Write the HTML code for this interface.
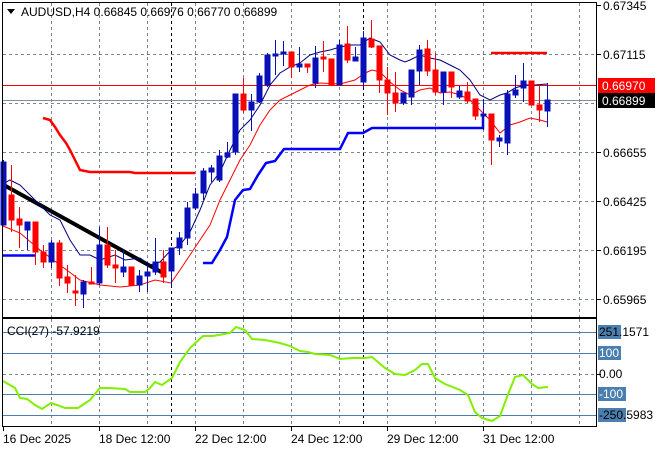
<!DOCTYPE html>
<html><head><meta charset="utf-8"><style>
html,body{margin:0;padding:0;background:#fff;}
svg{display:block;font-family:"Liberation Sans",sans-serif;}
</style></head><body>
<svg width="660" height="450" viewBox="0 0 660 450" xmlns="http://www.w3.org/2000/svg">
<rect width="660" height="450" fill="#fff"/>
<!-- main grid -->
<g stroke="#7a8694" stroke-width="1" stroke-dasharray="3,3" fill="none">
<path d="M51.5 3V317M99.5 3V317M147.5 3V317M195.5 3V317M243.5 3V317M291.5 3V317M339.5 3V317M387.5 3V317M435.5 3V317M483.5 3V317M531.5 3V317M579.5 3V317"/>
<path d="M3 54.5H596M3 103.5H596M3 152.5H596M3 201.5H596M3 250.5H596M3 299.5H596"/>
<path d="M51.5 319V426M99.5 319V426M147.5 319V426M195.5 319V426M243.5 319V426M291.5 319V426M339.5 319V426M387.5 319V426M435.5 319V426M483.5 319V426M531.5 319V426M579.5 319V426M3 374.5H596"/>
</g>
<g stroke="#000" stroke-width="1" stroke-dasharray="3,3"><path d="M171.5 3V317M363.5 3V317M171.5 319V426M363.5 319V426"/></g>
<!-- price lines -->
<path d="M3 85.5H596" stroke="#ff0000"/>
<path d="M3 100.5H596" stroke="#8090a0"/>
<!-- red step upper -->
<polyline fill="none" stroke="#ff0000" stroke-width="2.5" points="43,118 50,120 55,127 60,135 66,143 70,150 75,160 80,170 90,172 130,172 135,173 195,173"/>
<path d="M491 53H547" stroke="#ff0000" stroke-width="2.5"/>
<!-- blue step lower -->
<path d="M2 255.5H35" stroke="#0000ff" stroke-width="2.5"/>
<polyline fill="none" stroke="#0000ff" stroke-width="2.5" points="203,263 212,263 220,250 227,237 235,200 243,190 250,189 258,175 266,163 275,161 284,149 340,149 348,133 363,133 372,128 483,128 483,115"/>
<!-- black trendline -->
<path d="M2 184L163 273" stroke="#000" stroke-width="4"/>
<!-- navy upper line -->
<polyline fill="none" stroke="#000080" stroke-width="1" points="3,184 10,180 20,185 30,195 40,205 50,215 60,220 70,240 80,255 90,255 100,260 115,255 125,260 140,258 150,265 160,262 171,250 180,245 190,232 200,210 210,185 220,172 230,150 240,130 250,120 260,105 270,85 280,73 290,67 300,63 310,55 320,52 330,50 340,47 350,45 360,45 370,38 380,42 390,55 400,60 405,62 410,60 420,55 430,58 440,60 450,65 460,70 470,80 480,95 490,100 500,95 507,93 515,88 525,85 535,85 547,84"/>
<!-- red lower line -->
<polyline fill="none" stroke="#ff0000" stroke-width="1" points="3,226 20,233 40,250 60,265 80,280 100,285 120,287 140,285 155,280 171,283 180,270 190,255 200,240 210,225 220,200 230,180 240,160 250,145 260,125 270,110 280,100 290,95 300,90 310,85 320,83 340,84 355,80 365,73 372,70 380,72 390,82 400,90 410,95 420,90 430,88 440,93 450,92 460,95 470,100 480,110 490,120 500,133 510,125 520,122 530,118 540,120 547,122"/>
<!-- candles blue -->
<g stroke="#0a10b8" fill="#0a10b8" stroke-width="1">
<path d="M3.5 160V225M27.5 222V250M51.5 240V268M83.5 280V308M99.5 227V285M123.5 250V277M139.5 270V292M147.5 265V292M155.5 238V275M171.5 248V287M179.5 232V255M187.5 202V245M195.5 188V210M203.5 168V200M211.5 165V182M219.5 150V182M227.5 142V158M235.5 94V155M251.5 94V131M259.5 73V103M267.5 53V87M275.5 40V75M283.5 41V66M299.5 47V72M315.5 46V88M339.5 40V85M355.5 47V61M363.5 31V88M403.5 93V105M411.5 70V105M419.5 45V85M443.5 72V105M459.5 86V99M483.5 99V130M499.5 135V147M507.5 90V155M515.5 75V98M523.5 63V102M547.5 83V127"/>
<rect x="1" y="162" width="5" height="63"/><rect x="25" y="222" width="5" height="8"/><rect x="49" y="243" width="5" height="19"/><rect x="81" y="282" width="5" height="12"/><rect x="97" y="245" width="5" height="38"/><rect x="121" y="267" width="5" height="5"/><rect x="137" y="276" width="5" height="9"/><rect x="145" y="272" width="5" height="4"/><rect x="153" y="262" width="5" height="10"/><rect x="169" y="248" width="5" height="23"/><rect x="177" y="238" width="5" height="10"/><rect x="185" y="208" width="5" height="30"/><rect x="193" y="194" width="5" height="14"/><rect x="201" y="171" width="5" height="22"/><rect x="209" y="168" width="5" height="4"/><rect x="217" y="156" width="5" height="24"/><rect x="225" y="153" width="5" height="4"/><rect x="233" y="94" width="5" height="58"/><rect x="249" y="102" width="5" height="8"/><rect x="257" y="76" width="5" height="26"/><rect x="265" y="55" width="5" height="30"/><rect x="273" y="54" width="5" height="2"/><rect x="281" y="52" width="5" height="2"/><rect x="297" y="64" width="5" height="3"/><rect x="313" y="58" width="5" height="25"/><rect x="337" y="45" width="5" height="40"/><rect x="353" y="57" width="5" height="4"/><rect x="361" y="38" width="5" height="44"/><rect x="401" y="93" width="5" height="10"/><rect x="409" y="70" width="5" height="27"/><rect x="417" y="50" width="5" height="21"/><rect x="441" y="72" width="5" height="20"/><rect x="457" y="91" width="5" height="6"/><rect x="481" y="114" width="5" height="2"/><rect x="497" y="138" width="5" height="3"/><rect x="505" y="94" width="5" height="49"/><rect x="513" y="90" width="5" height="5"/><rect x="521" y="81" width="5" height="7"/><rect x="545" y="100" width="5" height="11"/>
</g>
<!-- candles red -->
<g stroke="#ff0000" fill="#ff0000" stroke-width="1">
<path d="M11.5 165V232M19.5 207V248M35.5 222V265M43.5 245V268M59.5 240V286M67.5 265V293M75.5 275V306M91.5 267V284M107.5 227V268M115.5 250V283M131.5 267V285M163.5 250V283M243.5 78V113M291.5 52V78M307.5 64V73M323.5 41V72M331.5 59V85M347.5 26V63M371.5 20V48M379.5 46V93M387.5 67V115M395.5 72V112M427.5 40V76M435.5 53V95M451.5 72V98M467.5 82V103M475.5 99V120M491.5 114V165M531.5 81V105M539.5 85V122"/>
<rect x="9" y="195" width="5" height="25"/><rect x="17" y="219" width="5" height="6"/><rect x="33" y="222" width="5" height="30"/><rect x="41" y="252" width="5" height="10"/><rect x="57" y="243" width="5" height="35"/><rect x="65" y="277" width="5" height="6"/><rect x="73" y="291" width="5" height="2"/><rect x="89" y="282" width="5" height="2"/><rect x="105" y="245" width="5" height="20"/><rect x="113" y="265" width="5" height="3"/><rect x="129" y="267" width="5" height="18"/><rect x="161" y="262" width="5" height="15"/><rect x="241" y="94" width="5" height="16"/><rect x="289" y="52" width="5" height="15"/><rect x="305" y="64" width="5" height="3"/><rect x="321" y="57" width="5" height="2"/><rect x="329" y="59" width="5" height="26"/><rect x="345" y="44" width="5" height="16"/><rect x="369" y="39" width="5" height="8"/><rect x="377" y="46" width="5" height="34"/><rect x="385" y="80" width="5" height="13"/><rect x="393" y="93" width="5" height="10"/><rect x="425" y="49" width="5" height="22"/><rect x="433" y="70" width="5" height="22"/><rect x="449" y="72" width="5" height="15"/><rect x="465" y="92" width="5" height="9"/><rect x="473" y="99" width="5" height="17"/><rect x="489" y="114" width="5" height="26"/><rect x="529" y="81" width="5" height="24"/><rect x="537" y="105" width="5" height="5"/>
</g>
<!-- CCI levels -->
<g stroke="#4a7fb0" stroke-width="1"><path d="M3 332.5H596M3 353.5H596M3 394.5H596M3 415.5H596"/></g>
<polyline fill="none" stroke="#80f000" stroke-width="2" points="3,381 15,388 20,398 27,399 35,405 42,409 51,403 57,405 65,408 78,408 90,400 100,388 108,388 125,389 130,392 145,392 150,388 155,382 162,385 172,378 180,362 190,348 203,336 213,336 230,333 236,327 245,330 252,339 265,340 280,343 290,346 300,351 308,352 315,354 330,355 340,359 352,358 365,358 372,357 385,368 395,374 405,375 415,370 422,364 428,364 435,378 445,384 460,390 468,395 475,412 482,418 492,421 500,416 507,397 515,377 523,375 532,384 538,388 548,387"/>
<!-- frames -->
<g fill="none" stroke="#000" stroke-width="1">
<rect x="2.5" y="2.5" width="594" height="315"/>
<rect x="2.5" y="318.5" width="594" height="108"/>
</g>
<g stroke="#000"><path d="M3.5 427V431M99.5 427V431M195.5 427V431M291.5 427V431M387.5 427V431M483.5 427V431M597 5.5H601M597 54.5H601M597 152.5H601M597 201.5H601M597 250.5H601M597 299.5H601M597 374.5H601"/></g>
<!-- header -->
<path d="M7 9H15L11 14Z" fill="#000"/>
<text x="21" y="16" font-size="12" fill="#000">AUDUSD,H4  0.66845 0.66976 0.66770 0.66899</text>
<text x="7" y="335" font-size="12" fill="#000">CCI(27) -57.9219</text>
<!-- price axis -->
<g font-size="12" fill="#000">
<text x="603" y="10">0.67345</text>
<text x="603" y="59">0.67115</text>
<text x="603" y="157">0.66655</text>
<text x="603" y="206">0.66425</text>
<text x="603" y="255">0.66195</text>
<text x="603" y="304">0.65965</text>
</g>
<rect x="598" y="78" width="57" height="15" fill="#ff0000"/>
<text x="602" y="90" font-size="12" fill="#fff">0.66970</text>
<rect x="598" y="93" width="57" height="15" fill="#000"/>
<text x="602" y="105" font-size="12" fill="#fff">0.66899</text>
<!-- CCI axis -->
<rect x="598" y="325" width="23" height="14" fill="#4a7fb0"/>
<rect x="598" y="346" width="23" height="14" fill="#4a7fb0"/>
<rect x="598" y="387" width="28" height="14" fill="#4a7fb0"/>
<rect x="598" y="408" width="28" height="14" fill="#4a7fb0"/>
<g font-size="12">
<text x="599" y="336" fill="#000">251.1571</text>
<text x="599" y="357" fill="#fff">100</text>
<text x="599" y="378" fill="#000">0.00</text>
<text x="599" y="398" fill="#fff">-100</text>
<text x="599" y="419" fill="#000">-250.5983</text>
</g>
<!-- time axis -->
<g font-size="12" fill="#000">
<text x="3" y="443">16 Dec 2025</text>
<text x="99" y="443">18 Dec 12:00</text>
<text x="195" y="443">22 Dec 12:00</text>
<text x="291" y="443">24 Dec 12:00</text>
<text x="387" y="443">29 Dec 12:00</text>
<text x="483" y="443">31 Dec 12:00</text>
</g>
</svg>
</body></html>
